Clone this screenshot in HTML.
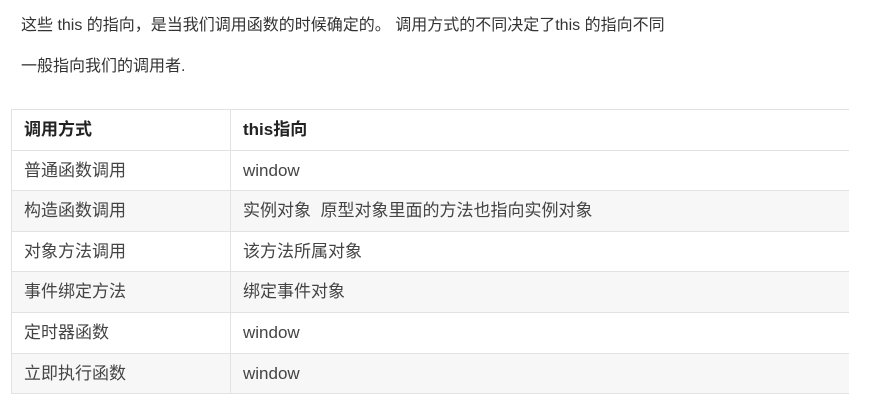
<html><head><style>
body{margin:0;background:#fff;font-family:"Liberation Sans","Noto Sans CJK SC",sans-serif;color:#333;width:888px;height:413px;overflow:hidden;position:relative}
.p{position:absolute;left:21px;font-size:16px;line-height:20px;color:#333}
.r{position:absolute;left:11px;width:838px;height:40.6px;border-top:1px solid #e2e2e2;box-sizing:border-box;font-size:17px;color:#444}
.r.s{background:#f7f7f7}
.r span{position:absolute;top:10px;line-height:20px}
.a{left:13px}.b{left:232px}
.h span{font-weight:bold;color:#222}
.v{position:absolute;top:109px;width:1px;height:284px;background:#e2e2e2}
</style></head><body>
<div class="p" style="top:16px">这些 this 的指向，是当我们调用函数的时候确定的。 调用方式的不同决定了this 的指向不同</div>
<div class="p" style="top:57px">一般指向我们的调用者.</div>
<div class="r h" style="top:109px"><span class="a">调用方式</span><span class="b">this指向</span></div>
<div class="r" style="top:149.6px"><span class="a">普通函数调用</span><span class="b">window</span></div>
<div class="r s" style="top:190.2px"><span class="a">构造函数调用</span><span class="b">实例对象&nbsp; 原型对象里面的方法也指向实例对象</span></div>
<div class="r" style="top:230.8px"><span class="a">对象方法调用</span><span class="b">该方法所属对象</span></div>
<div class="r s" style="top:271.4px"><span class="a">事件绑定方法</span><span class="b">绑定事件对象</span></div>
<div class="r" style="top:312px"><span class="a">定时器函数</span><span class="b">window</span></div>
<div class="r s" style="top:352.6px"><span class="a">立即执行函数</span><span class="b">window</span></div>
<div style="position:absolute;left:11px;top:393px;width:838px;height:1px;background:#e2e2e2"></div>
<div class="v" style="left:11px"></div>
<div class="v" style="left:230px"></div>
</body></html>
